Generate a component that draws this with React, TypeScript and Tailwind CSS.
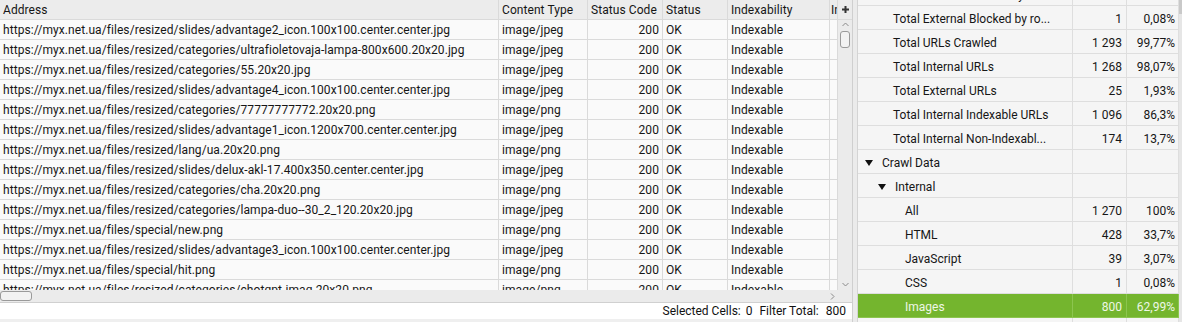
import React from "react";

const font = { fontFamily: "Roboto, 'Liberation Sans', sans-serif" };

const base = "https://myx.net.ua/files/";
const rows: [string, string][] = [
  [base + "resized/slides/advantage2_icon.100x100.center.center.jpg", "image/jpeg"],
  [base + "resized/categories/ultrafioletovaja-lampa-800x600.20x20.jpg", "image/jpeg"],
  [base + "resized/categories/55.20x20.jpg", "image/jpeg"],
  [base + "resized/slides/advantage4_icon.100x100.center.center.jpg", "image/jpeg"],
  [base + "resized/categories/77777777772.20x20.png", "image/png"],
  [base + "resized/slides/advantage1_icon.1200x700.center.center.jpg", "image/jpeg"],
  [base + "resized/lang/ua.20x20.png", "image/png"],
  [base + "resized/slides/delux-akl-17.400x350.center.center.jpg", "image/jpeg"],
  [base + "resized/categories/cha.20x20.png", "image/png"],
  [base + "resized/categories/lampa-duo--30_2_120.20x20.jpg", "image/jpeg"],
  [base + "special/new.png", "image/png"],
  [base + "resized/slides/advantage3_icon.100x100.center.center.jpg", "image/jpeg"],
  [base + "special/hit.png", "image/png"],
  [base + "resized/categories/chotgpt-imag.20x20.png", "image/png"],
];

type SRow = { label: string; n?: string; p?: string; level: number; group?: boolean; active?: boolean };
const summary: SRow[] = [
  { label: "Total Internal Blocked by ro...", n: "0", p: "0%", level: 1 },
  { label: "Total External Blocked by ro...", n: "1", p: "0,08%", level: 1 },
  { label: "Total URLs Crawled", n: "1 293", p: "99,77%", level: 1 },
  { label: "Total Internal URLs", n: "1 268", p: "98,07%", level: 1 },
  { label: "Total External URLs", n: "25", p: "1,93%", level: 1 },
  { label: "Total Internal Indexable URLs", n: "1 096", p: "86,3%", level: 1 },
  { label: "Total Internal Non-Indexabl...", n: "174", p: "13,7%", level: 1 },
  { label: "Crawl Data", level: 0, group: true },
  { label: "Internal", level: 1, group: true },
  { label: "All", n: "1 270", p: "100%", level: 2 },
  { label: "HTML", n: "428", p: "33,7%", level: 2 },
  { label: "JavaScript", n: "39", p: "3,07%", level: 2 },
  { label: "CSS", n: "1", p: "0,08%", level: 2 },
  { label: "Images", n: "800", p: "62,99%", level: 2, active: true },
  { label: "", level: 2 },
];

function Tri() {
  return (
    <svg width="8" height="6" viewBox="0 0 8 6" className="shrink-0">
      <polygon points="0,0 8,0 4,6" fill="#111" />
    </svg>
  );
}

const cols = "grid grid-cols-[499px_89px_75px_65px_102px_8px]";
const cell = "border-r border-b border-[#dadada] px-[3px] whitespace-nowrap overflow-hidden leading-[21px] h-[20px] tracking-[0.07px]";

export default function App() {
  return (
    <div className="flex w-[1182px] h-[322px] overflow-hidden bg-[#efefef] text-[12px] text-[#161616]" style={font}>
      {/* left panel */}
      <div className="w-[853px] flex flex-col border-r border-[#cfcfcf] bg-[#efefef]">
        <div className="flex h-[290px]">
          <div className="w-[838px] overflow-hidden bg-[#fafafa]">
            <div className={cols + " bg-[#ececec]"}>
              <div className={cell}>Address</div>
              <div className={cell}>Content Type</div>
              <div className={cell}>Status Code</div>
              <div className={cell}>Status</div>
              <div className={cell}>Indexability</div>
              <div className={cell + " !px-[1px]"}>In</div>
            </div>
            {rows.map(([u, t], i) => (
              <div key={i} className={cols}>
                <div className={cell}>{u}</div>
                <div className={cell}>{t}</div>
                <div className={cell + " text-right"}>200</div>
                <div className={cell}>OK</div>
                <div className={cell}>Indexable</div>
                <div className={cell}></div>
              </div>
            ))}
          </div>
          <div className="w-[14px] flex flex-col bg-[#ebebeb]">
            <div className="h-[20px] border-b border-[#dadada] flex items-center justify-center">
              <svg width="7" height="7" viewBox="0 0 7 7">
                <rect x="2.5" y="0" width="2" height="7" fill="#333" />
                <rect x="0" y="2.5" width="7" height="2" fill="#333" />
              </svg>
            </div>
            <div className="flex-1 flex flex-col items-center pt-[2px] pb-[3px]">
              <svg width="7" height="5" viewBox="0 0 7 5">
                <polyline points="0.5,4 3.5,1 6.5,4" fill="none" stroke="#8a8a8a" strokeWidth="1" />
              </svg>
              <div className="mt-[4px] w-[10px] h-[17px] rounded-[3px] border border-[#9a9a9a] bg-[#f2f2f2]"></div>
              <div className="flex-1"></div>
              <svg width="7" height="5" viewBox="0 0 7 5">
                <polyline points="0.5,1 3.5,4 6.5,1" fill="none" stroke="#8a8a8a" strokeWidth="1" />
              </svg>
            </div>
          </div>
        </div>
        <div className="h-[13px] flex items-center bg-[#ebebeb] border-b border-[#d0d0d0]">
          <div className="w-[32px] h-[10px] rounded-[3px] border border-[#9a9a9a] bg-[#f2f2f2]"></div>
          <div className="flex-1"></div>
          <svg width="5" height="7" viewBox="0 0 5 7" className="mr-[17px]">
            <polyline points="1,0.5 4,3.5 1,6.5" fill="none" stroke="#8a8a8a" strokeWidth="1" />
          </svg>
        </div>
        <div className="h-[16px] bg-white flex items-end justify-end pr-[6px] leading-[15px] text-[#111]">
          <span>Selected Cells:</span>
          <span className="ml-[5px]">0</span>
          <span className="ml-[7px]">Filter Total:</span>
          <span className="ml-[7px]">800</span>
        </div>
        <div className="flex-1 bg-[#efefef]"></div>
      </div>
      {/* separator */}
      <div className="w-[4px] bg-[#ebebeb]"></div>
      {/* right panel */}
      <div className="flex-1 flex border-l border-[#d4d4d4] bg-[#f5f5f5] overflow-hidden">
        <div className="w-[321px] overflow-hidden">
          <div className="-mt-[18px]">
            {summary.map((r, i) => {
              const bg = r.active ? "border-[#8cc54f]" : "border-[#dedede]";
              const leafPad = r.level === 2 ? "pl-[47px]" : r.level === 1 ? "pl-[35px]" : "pl-[23px]";
              const groupPad = r.level === 0 ? "pl-[7px]" : "pl-[20px]";
              return (
                <div key={i} className={"grid grid-cols-[215px_54px_52px] h-[24px] " + (r.active ? "bg-[#74b52e] text-[#eef7e6]" : "")}>
                  <div className={"border-r border-b flex items-center pt-[2px] whitespace-nowrap overflow-hidden " + bg + " " + (r.group ? groupPad : leafPad)}>
                    {r.group ? (
                      <>
                        <Tri />
                        <span className="ml-[9px]">{r.label}</span>
                      </>
                    ) : (
                      <span>{r.label}</span>
                    )}
                  </div>
                  <div className={"border-r border-b flex items-center pt-[2px] justify-end pr-[4px] " + bg}>{r.n}</div>
                  <div className={"border-r border-b flex items-center pt-[2px] justify-end pr-[3px] " + bg}>{r.p}</div>
                </div>
              );
            })}
          </div>
        </div>
        <div className="flex-1 bg-[#e6e6e6] flex flex-col">
          <div className="h-[14px] bg-[#c9c9c9]"></div>
        </div>
      </div>
    </div>
  );
}
